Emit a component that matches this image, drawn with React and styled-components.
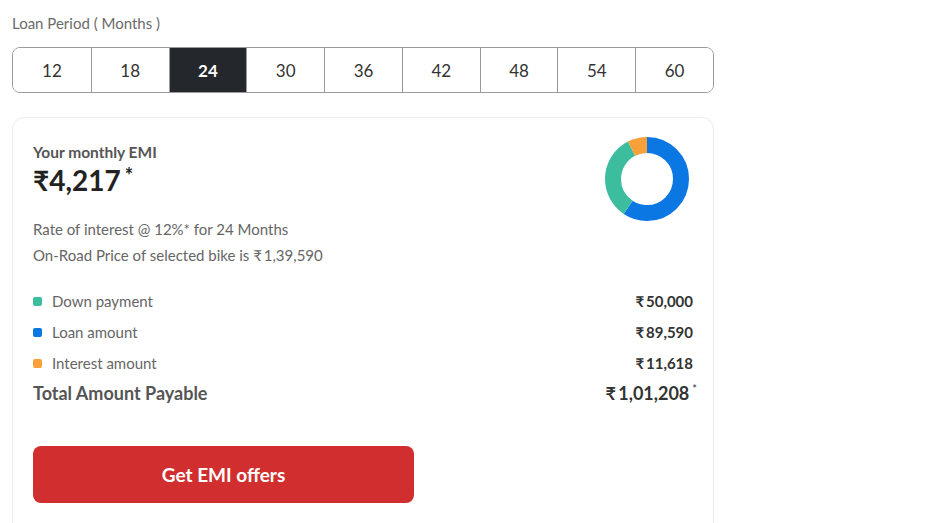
import React from 'react';
import styled, { createGlobalStyle } from 'styled-components';

const GlobalStyle = createGlobalStyle`
  body {
    margin: 0;
    background: #ffffff;
    font-family: Lato, "Noto Sans", "Liberation Sans", sans-serif;
  }
`;

const periods = [12, 18, 24, 30, 36, 42, 48, 54, 60];

const breakdown = [
  { id: 'down', label: 'Down payment', value: 50000, color: '#3bbd9e' },
  { id: 'loan', label: 'Loan amount', value: 89590, color: '#0b77e3' },
  { id: 'interest', label: 'Interest amount', value: 11618, color: '#f8a03a' },
];

const inr = (n) => n.toLocaleString('en-IN');

// donut slices, clockwise from 12 o'clock: loan, down payment, interest
function Donut({ size = 84, thickness = 16 }) {
  const order = ['loan', 'down', 'interest'].map((id) => breakdown.find((b) => b.id === id));
  const total = order.reduce((s, b) => s + b.value, 0);
  const r = (size - thickness) / 2;
  const c = size / 2;
  const circ = 2 * Math.PI * r;
  let offset = 0;
  return (
    <svg width={size} height={size} viewBox={`0 0 ${size} ${size}`}>
      <g transform={`rotate(-90 ${c} ${c})`}>
        {order.map((b) => {
          const len = (b.value / total) * circ;
          const el = (
            <circle
              key={b.id}
              cx={c}
              cy={c}
              r={r}
              fill="none"
              stroke={b.color}
              strokeWidth={thickness}
              strokeDasharray={`${len} ${circ - len}`}
              strokeDashoffset={-offset}
            />
          );
          offset += len;
          return el;
        })}
      </g>
    </svg>
  );
}

export default function App() {
  const active = 24;
  return (
    <>
      <GlobalStyle />
      <Page>
        <FieldLabel>Loan Period ( Months )</FieldLabel>
        <Segments>
          {periods.map((p) => (
            <Segment key={p} $active={p === active}>{p}</Segment>
          ))}
        </Segments>

        <Card>
          <Header>
            <Summary>
              <EmiLabel>Your monthly EMI</EmiLabel>
              <EmiAmount>₹4,217<Star>*</Star></EmiAmount>
              <Note $first>Rate of interest @ 12%* for 24 Months</Note>
              <Note>On-Road Price of selected bike is ₹&#8201;1,39,590</Note>
            </Summary>
            <ChartWrap>
              <Donut />
            </ChartWrap>
          </Header>

          <Legend>
            {breakdown.map((b) => (
              <LegendRow key={b.id}>
                <LegendName>
                  <Swatch $color={b.color} />
                  {b.label}
                </LegendName>
                <LegendValue>₹&#8201;{inr(b.value)}</LegendValue>
              </LegendRow>
            ))}
          </Legend>

          <TotalRow>
            <TotalLabel>Total Amount Payable</TotalLabel>
            <TotalValue>₹&#8201;1,01,208<TotalStar>*</TotalStar></TotalValue>
          </TotalRow>

          <OfferButton>Get EMI offers</OfferButton>
        </Card>
      </Page>
    </>
  );
}

const Page = styled.div`
  width: 702px;
  padding: 13px 12px 0;
`;

const FieldLabel = styled.div`
  font-size: 15px;
  line-height: 20px;
  color: #6b6b6b;
`;

const Segments = styled.div`
  display: grid;
  grid-template-columns: repeat(9, 1fr);
  margin-top: 14px;
  height: 46px;
  border: 1px solid #9a9a9a;
  border-radius: 8px;
  overflow: hidden;
  box-sizing: border-box;
`;

const Segment = styled.div`
  display: flex;
  align-items: center;
  justify-content: center;
  font-size: 17px;
  color: ${(p) => (p.$active ? '#ffffff' : '#333333')};
  background: ${(p) => (p.$active ? '#24272c' : '#ffffff')};
  font-weight: ${(p) => (p.$active ? 700 : 400)};
  border-left: 1px solid #9a9a9a;

  &:first-child {
    border-left: none;
  }
`;

const Card = styled.div`
  margin-top: 24px;
  border: 1px solid #ececec;
  border-radius: 12px;
  padding: 17px 20px 40px;
  height: 420px;
  box-sizing: border-box;
`;

const Header = styled.div`
  display: flex;
  justify-content: space-between;
  align-items: flex-start;
`;

const Summary = styled.div`
  display: flex;
  flex-direction: column;
  padding-top: 7px;
`;

const EmiLabel = styled.div`
  font-size: 15.5px;
  line-height: 20px;
  font-weight: 700;
  color: #555555;
`;

const EmiAmount = styled.div`
  margin-top: 1px;
  font-size: 28px;
  line-height: 34px;
  font-weight: 700;
  color: #222222;
`;

const Star = styled.span`
  font-size: 20px;
  vertical-align: top;
  margin-left: 4px;
  line-height: 24px;
`;

const Note = styled.div`
  margin-top: ${(p) => (p.$first ? '22px' : '6px')};
  font-size: 15px;
  line-height: 20px;
  color: #666666;
`;

const ChartWrap = styled.div`
  margin-right: 4px;
  margin-top: 2px;
`;

const Legend = styled.div`
  display: flex;
  flex-direction: column;
  gap: 11px;
  margin-top: 26px;
`;

const LegendRow = styled.div`
  display: flex;
  justify-content: space-between;
  align-items: center;
  height: 20px;
`;

const LegendName = styled.div`
  display: flex;
  align-items: center;
  gap: 10px;
  font-size: 15px;
  color: #666666;
`;

const Swatch = styled.span`
  width: 9px;
  height: 9px;
  border-radius: 2px;
  background: ${(p) => p.$color};
`;

const LegendValue = styled.div`
  font-size: 15px;
  font-weight: 700;
  color: #333333;
`;

const TotalRow = styled.div`
  display: flex;
  justify-content: space-between;
  align-items: center;
  margin-top: 8px;
  height: 24px;
`;

const TotalLabel = styled.div`
  font-size: 18px;
  font-weight: 700;
  color: #555555;
`;

const TotalValue = styled.div`
  font-size: 18px;
  font-weight: 700;
  color: #333333;
  margin-right: -4px;
`;

const TotalStar = styled.span`
  font-size: 11px;
  vertical-align: top;
  margin-left: 3px;
  font-weight: 400;
`;

const OfferButton = styled.button`
  display: block;
  margin-top: 41px;
  width: 381px;
  height: 57px;
  border: none;
  border-radius: 8px;
  background: #d12e2f;
  color: #ffffff;
  font-family: inherit;
  font-size: 19px;
  font-weight: 700;
  cursor: pointer;
`;
